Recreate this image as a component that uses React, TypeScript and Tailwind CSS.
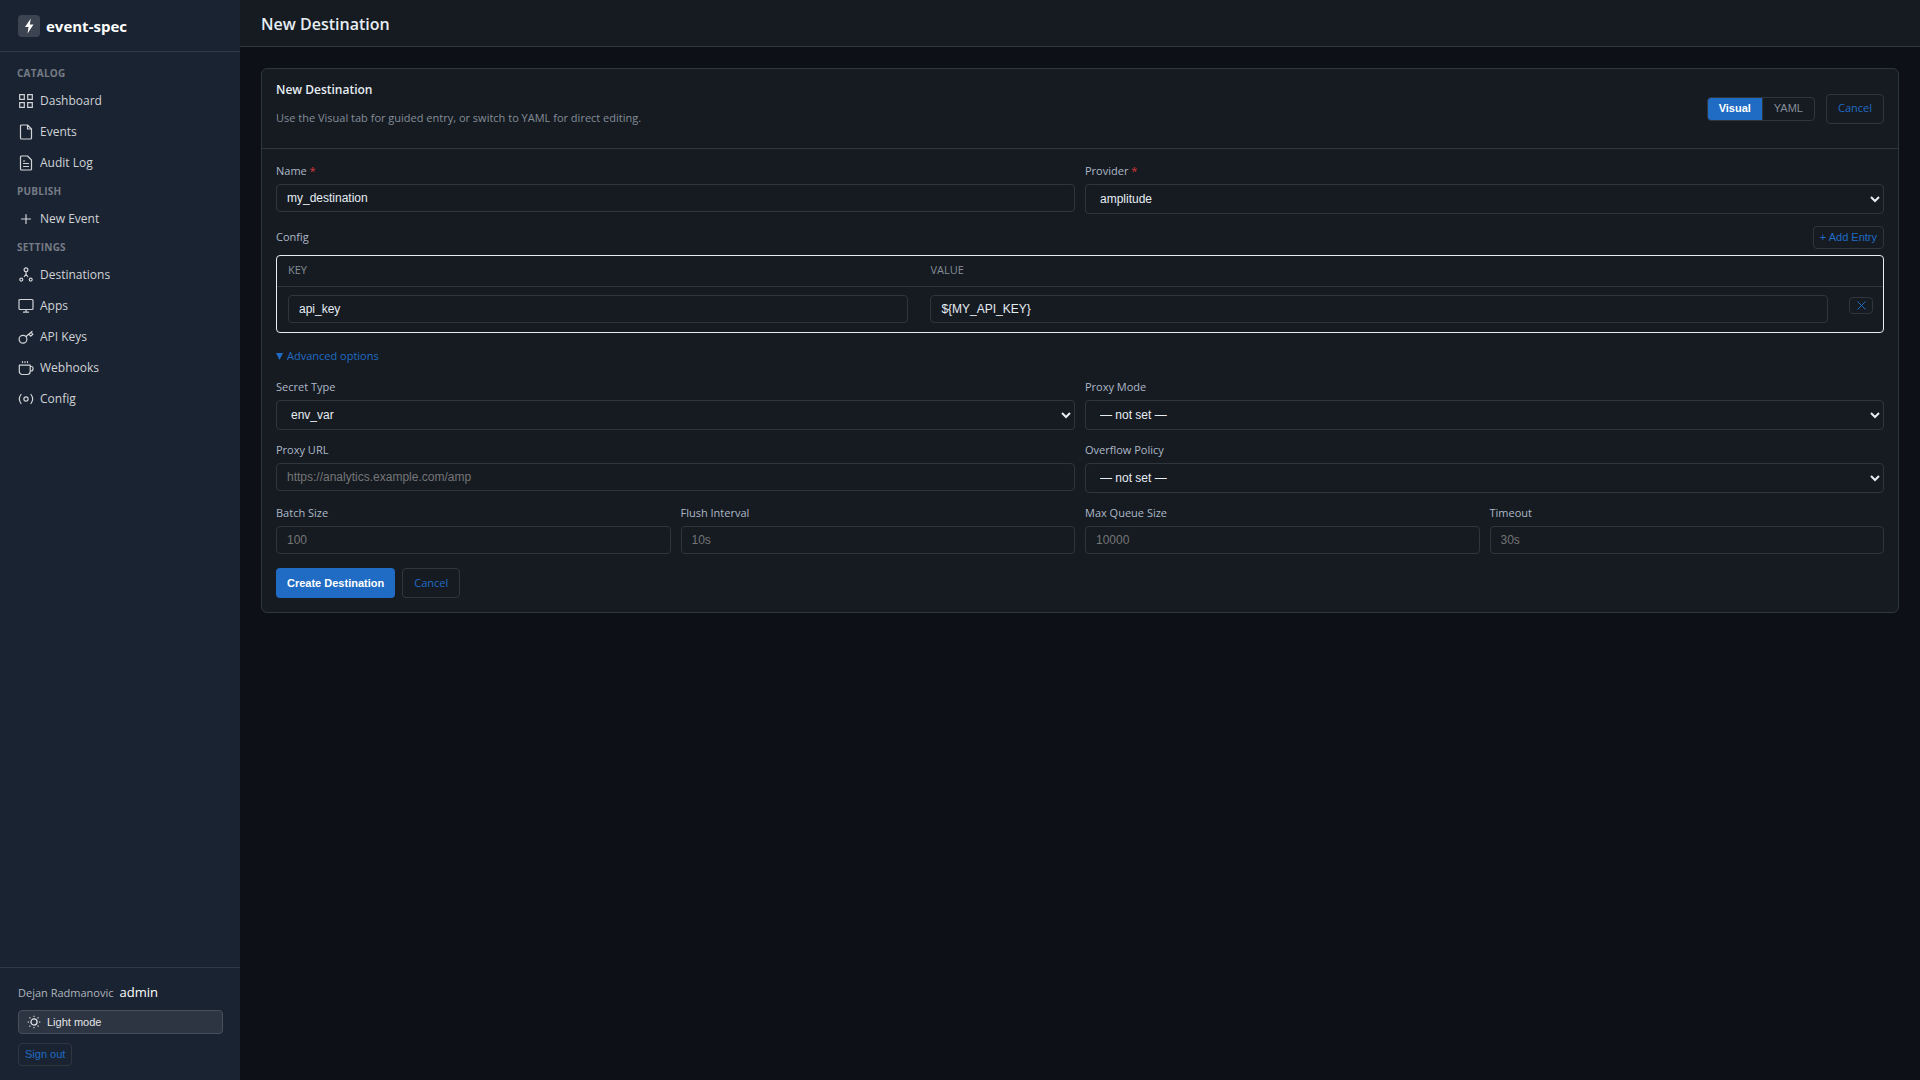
import { useState, type ReactNode } from 'react';
import clsx from 'clsx';

type IconProps = { children: ReactNode };

function Icon({ children }: IconProps) {
  return (
    <svg
      className="size-4 shrink-0"
      viewBox="0 0 16 16"
      fill="none"
      stroke="currentColor"
      strokeWidth="1.2"
      strokeLinecap="round"
      strokeLinejoin="round"
      aria-hidden="true"
    >
      {children}
    </svg>
  );
}

const icons = {
  dashboard: (
    <Icon>
      <path strokeLinejoin="miter" d="M1.7 1.7h4.6v4.6H1.7zM9.7 1.7h4.6v4.6H9.7zM1.7 9.7h4.6v4.6H1.7zM9.7 9.7h4.6v4.6H9.7z" />
    </Icon>
  ),
  events: (
    <Icon>
      <path d="M9.5 1h-6a1 1 0 0 0-1 1v12a1 1 0 0 0 1 1h9a1 1 0 0 0 1-1V5zM9.5 1v4h4" />
    </Icon>
  ),
  audit: (
    <Icon>
      <path d="M9.5 1h-6a1 1 0 0 0-1 1v12a1 1 0 0 0 1 1h9a1 1 0 0 0 1-1V5zM5.5 6h1.2M5.5 8.5h5M5.5 11.5h5" />
    </Icon>
  ),
  plus: (
    <Icon>
      <path d="M8 3.5v9M3.5 8h9" />
    </Icon>
  ),
  destinations: (
    <Icon>
      <circle cx="8" cy="2.800" r="1.900" />
      <circle cx="3.300" cy="12.600" r="1.500" />
      <circle cx="12.700" cy="12.600" r="1.500" />
      <path d="M8 5v2.300M8 7.300 6.300 9.500M8 7.300l1.700 2.200" />
    </Icon>
  ),
  apps: (
    <Icon>
      <rect x="1" y="1.5" width="14" height="10" rx="1" />
      <path d="M8 11.5V14M5.5 14.2h5" />
    </Icon>
  ),
  keys: (
    <Icon>
      <circle cx="5" cy="10.3" r="3.9" />
      <path d="m8 7.5 6-5M10.8 5.2l1.8 2 2.3-1.900-1.800-2" />
    </Icon>
  ),
  webhooks: (
    <Icon>
      <path d="M1.3 5.2h10.9v6.3a3 3 0 0 1-3 3H4.3a3 3 0 0 1-3-3zM12.2 6.5h1.3a1.5 1.5 0 0 1 1.5 1.5v1a2 2 0 0 1-2 2h-.8M4.5 1.6v1M7 1.6v1M9.5 1.6v1" />
    </Icon>
  ),
  config: (
    <Icon>
      <circle cx="8" cy="8" r="2.1" />
      <path d="M3 3.5c-2 2.7-2 6.3 0 9M13 3.5c2 2.7 2 6.3 0 9" />
    </Icon>
  ),
};

const navigation = [
  {
    title: 'Catalog',
    items: [
      { name: 'Dashboard', icon: icons.dashboard },
      { name: 'Events', icon: icons.events },
      { name: 'Audit Log', icon: icons.audit },
    ],
  },
  {
    title: 'Publish',
    items: [{ name: 'New Event', icon: icons.plus }],
  },
  {
    title: 'Settings',
    items: [
      { name: 'Destinations', icon: icons.destinations },
      { name: 'Apps', icon: icons.apps },
      { name: 'API Keys', icon: icons.keys },
      { name: 'Webhooks', icon: icons.webhooks },
      { name: 'Config', icon: icons.config },
    ],
  },
];

const controlClass =
  "w-full rounded-[4px] border border-[#30363d] bg-[#161b22] px-[10px] font-['Liberation_Sans',sans-serif] text-[12px] text-[#e6edf3] placeholder:text-[#757575]";

const outlineClass = 'rounded-[4px] border border-[#30363d] text-[#206bc4]';

function Sidebar() {
  return (
    <aside className="flex w-60 shrink-0 flex-col bg-[#1a2332] text-[#d1d3d6]">
      <div className="flex h-[52px] items-center gap-[6px] border-b border-[#303947] px-[18px] pb-2 pt-[9px]">
        <span className="flex size-[22px] items-center justify-center rounded-[4px] bg-[#3c4451]">
          <svg className="size-4" viewBox="0 0 16 16" fill="#fff" aria-hidden="true">
            <path d="M9.8.5 4 9h3.500l-1 6.500L12.500 6.500H8.800z" />
          </svg>
        </span>
        <span className="text-[15px] font-bold text-white">event-spec</span>
      </div>

      <nav className="flex-1 pt-2">
        {navigation.map((section) => (
          <div key={section.title}>
            <h2 className="flex h-[25px] items-center px-[17px] pt-px text-[10px] font-bold uppercase tracking-wide text-[#767c85]">
              {section.title}
            </h2>
            {section.items.map((item) => (
              <a key={item.name} href="#" className="flex h-[31px] items-center gap-[6px] px-[18px] text-[12px]">
                {item.icon}
                {item.name}
              </a>
            ))}
          </div>
        ))}
      </nav>

      {/* User */}
      <div className="border-t border-[#303947] py-[14px] pl-[18px] pr-[17px]">
        <div className="flex h-[22px] items-center gap-[6px]">
          <span className="text-[11px] text-[#b0b5bc]">Dejan Radmanovic</span>
          <span className="text-[13px] text-white">admin</span>
        </div>
        <button
          type="button"
          className="mt-[6px] flex h-6 w-full items-center gap-[6px] rounded-[4px] border border-[#474f5b] bg-[#2e3542] px-2 font-['Liberation_Sans',sans-serif] text-[11px] text-[#e3e5e8]"
        >
          <svg className="size-[14px]" viewBox="0 0 16 16" fill="none" stroke="currentColor" aria-hidden="true">
            <circle cx="8" cy="8" r="3.5" strokeWidth="1.4" />
            <path strokeWidth="1.2" d="M8 .8v1.6M8 13.6v1.6M.8 8h1.6M13.6 8h1.6M2.8 2.8l1.1 1.1M12.1 12.1l1.1 1.1M13.2 2.8l-1.1 1.1M3.9 12.1l-1.1 1.1" />
          </svg>
          Light mode
        </button>
        <button
          type="button"
          className={clsx(outlineClass, "mt-[9px] flex h-[23px] items-center px-[6px] font-['Liberation_Sans',sans-serif] text-[11px]")}
        >
          Sign out
        </button>
      </div>
    </aside>
  );
}

type FieldProps = {
  id: string;
  label: string;
  required?: boolean;
  children: ReactNode;
};

function Field({ id, label, required, children }: FieldProps) {
  return (
    <div>
      <label htmlFor={id} className="mb-[5px] block text-[11px] font-medium leading-4 text-[#adb8c6]">
        {label}
        {required && <span className="text-[#d63939]"> *</span>}
      </label>
      {children}
    </div>
  );
}

type SelectProps = { id: string; options: string[] };

function Select({ id, options }: SelectProps) {
  return (
    <select id={id} className={clsx(controlClass, 'block h-[30px]')}>
      {options.map((option) => (
        <option key={option}>{option}</option>
      ))}
    </select>
  );
}

type InputProps = { id: string; placeholder?: string; defaultValue?: string };

function Input(props: InputProps) {
  return <input type="text" className={clsx(controlClass, 'block h-7')} {...props} />;
}

function ConfigTable() {
  return (
    <div className="mt-[6px] rounded-[4px] border border-[#e6edf3]">
      <table className="w-full table-fixed">
        <colgroup>
          <col className="w-2/5" />
          <col />
          <col className="w-11" />
        </colgroup>
        <thead>
          <tr className="h-[30px] border-b border-[#30363d] text-left text-[11px] text-[#848d97]">
            <th className="px-[11px] pb-[2px] font-medium">KEY</th>
            <th className="px-[11px] pb-[2px] font-medium">VALUE</th>
            <th />
          </tr>
        </thead>
        <tbody>
          <tr className="h-[46px]">
            <td className="px-[11px] pb-px">
              <input aria-label="Key" defaultValue="api_key" className={clsx(controlClass, 'block h-7')} />
            </td>
            <td className="px-[11px] pb-px">
              <input aria-label="Value" defaultValue="${MY_API_KEY}" className={clsx(controlClass, 'block h-7')} />
            </td>
            <td className="pb-2 pl-[10px]">
              <button
                type="button"
                aria-label="Remove entry"
                className={clsx(outlineClass, 'flex h-[17px] w-6 items-center justify-center')}
              >
                <svg className="size-[9px]" viewBox="0 0 9 9" stroke="currentColor" aria-hidden="true">
                  <path d="m.5.5 8 8M8.5.5l-8 8" />
                </svg>
              </button>
            </td>
          </tr>
        </tbody>
      </table>
    </div>
  );
}

export default function App() {
  const [mode, setMode] = useState('Visual');
  const [advanced, setAdvanced] = useState(true);

  return (
    <div className="flex min-h-screen bg-[#0d1117] font-['Open_Sans',sans-serif] text-[#e6edf3]">
      <Sidebar />

      <div className="min-w-0 flex-1">
        <header className="flex h-[47px] items-center border-b border-[#30363d] bg-[#161b22] px-[21px] pt-[2px]">
          <h1 className="text-[16px] font-semibold">New Destination</h1>
        </header>

        <main className="p-[21px]">
          <section className="rounded-[6px] border border-[#30363d] bg-[#161b22]">
            <div className="flex h-20 items-center justify-between border-b border-[#30363d] px-[14px]">
              <div className="pb-[10px]">
                <h2 className="text-[12px] font-semibold leading-5">New Destination</h2>
                <p className="mt-2 text-[11px] leading-5 text-[#848d97]">
                  Use the Visual tab for guided entry, or switch to YAML for direct editing.
                </p>
              </div>
              <div className="flex items-center gap-[11px]">
                <div className="flex h-6 overflow-hidden rounded-[4px] border border-[#30363d] font-['Liberation_Sans',sans-serif] text-[11px]">
                  {['Visual', 'YAML'].map((tab) => (
                    <button
                      key={tab}
                      type="button"
                      onClick={() => setMode(tab)}
                      className={clsx(
                        'border-l border-[#30363d] px-[11px] first:border-l-0',
                        mode === tab ? 'bg-[#206bc4] font-bold text-white' : 'text-[#848d97]'
                      )}
                    >
                      {tab}
                    </button>
                  ))}
                </div>
                <a href="#" className={clsx(outlineClass, 'flex h-[30px] items-center px-[11px] text-[11px]')}>
                  Cancel
                </a>
              </div>
            </div>

            <form className="p-[14px]" onSubmit={(e) => e.preventDefault()}>
              <div className="grid grid-cols-2 gap-x-[10px]">
                <Field id="name" label="Name" required>
                  <Input id="name" defaultValue="my_destination" />
                </Field>
                <Field id="provider" label="Provider" required>
                  <Select id="provider" options={['amplitude', 'mixpanel', 'segment']} />
                </Field>
              </div>

              <div className="mt-3 flex h-[23px] items-center justify-between">
                <span className="text-[11px] font-medium text-[#adb8c6]">Config</span>
                <button
                  type="button"
                  className={clsx(outlineClass, "h-[23px] px-[6px] font-['Liberation_Sans',sans-serif] text-[11px]")}
                >
                  + Add Entry
                </button>
              </div>
              <ConfigTable />

              <button
                type="button"
                onClick={() => setAdvanced(!advanced)}
                className="my-[14px] flex h-[18px] items-center gap-1 text-[11px] text-[#206bc4]"
              >
                <svg className="size-[7px]" viewBox="0 0 7 7" fill="currentColor" aria-hidden="true">
                  <path d="M0 0h7L3.5 7z" />
                </svg>
                Advanced options
              </button>

              {advanced && (
                <div className="grid grid-cols-4 gap-x-[10px] gap-y-3">
                  <div className="col-span-2">
                    <Field id="secret" label="Secret Type">
                      <Select id="secret" options={['env_var', 'literal']} />
                    </Field>
                  </div>
                  <div className="col-span-2">
                    <Field id="proxy-mode" label="Proxy Mode">
                      <Select id="proxy-mode" options={['— not set —', 'enabled', 'disabled']} />
                    </Field>
                  </div>
                  <div className="col-span-2">
                    <Field id="proxy-url" label="Proxy URL">
                      <Input id="proxy-url" placeholder="https://analytics.example.com/amp" />
                    </Field>
                  </div>
                  <div className="col-span-2">
                    <Field id="overflow" label="Overflow Policy">
                      <Select id="overflow" options={['— not set —', 'drop', 'block']} />
                    </Field>
                  </div>
                  <Field id="batch" label="Batch Size">
                    <Input id="batch" placeholder="100" />
                  </Field>
                  <Field id="flush" label="Flush Interval">
                    <Input id="flush" placeholder="10s" />
                  </Field>
                  <Field id="queue" label="Max Queue Size">
                    <Input id="queue" placeholder="10000" />
                  </Field>
                  <Field id="timeout" label="Timeout">
                    <Input id="timeout" placeholder="30s" />
                  </Field>
                </div>
              )}

              <div className="mt-[14px] flex gap-[7px]">
                <button
                  type="submit"
                  className="h-[30px] rounded-[4px] bg-[#206bc4] px-[11px] font-['Liberation_Sans',sans-serif] text-[11px] font-bold text-white"
                >
                  Create Destination
                </button>
                <a href="#" className={clsx(outlineClass, 'flex h-[30px] items-center px-[11px] text-[11px]')}>
                  Cancel
                </a>
              </div>
            </form>
          </section>
        </main>
      </div>
    </div>
  );
}
